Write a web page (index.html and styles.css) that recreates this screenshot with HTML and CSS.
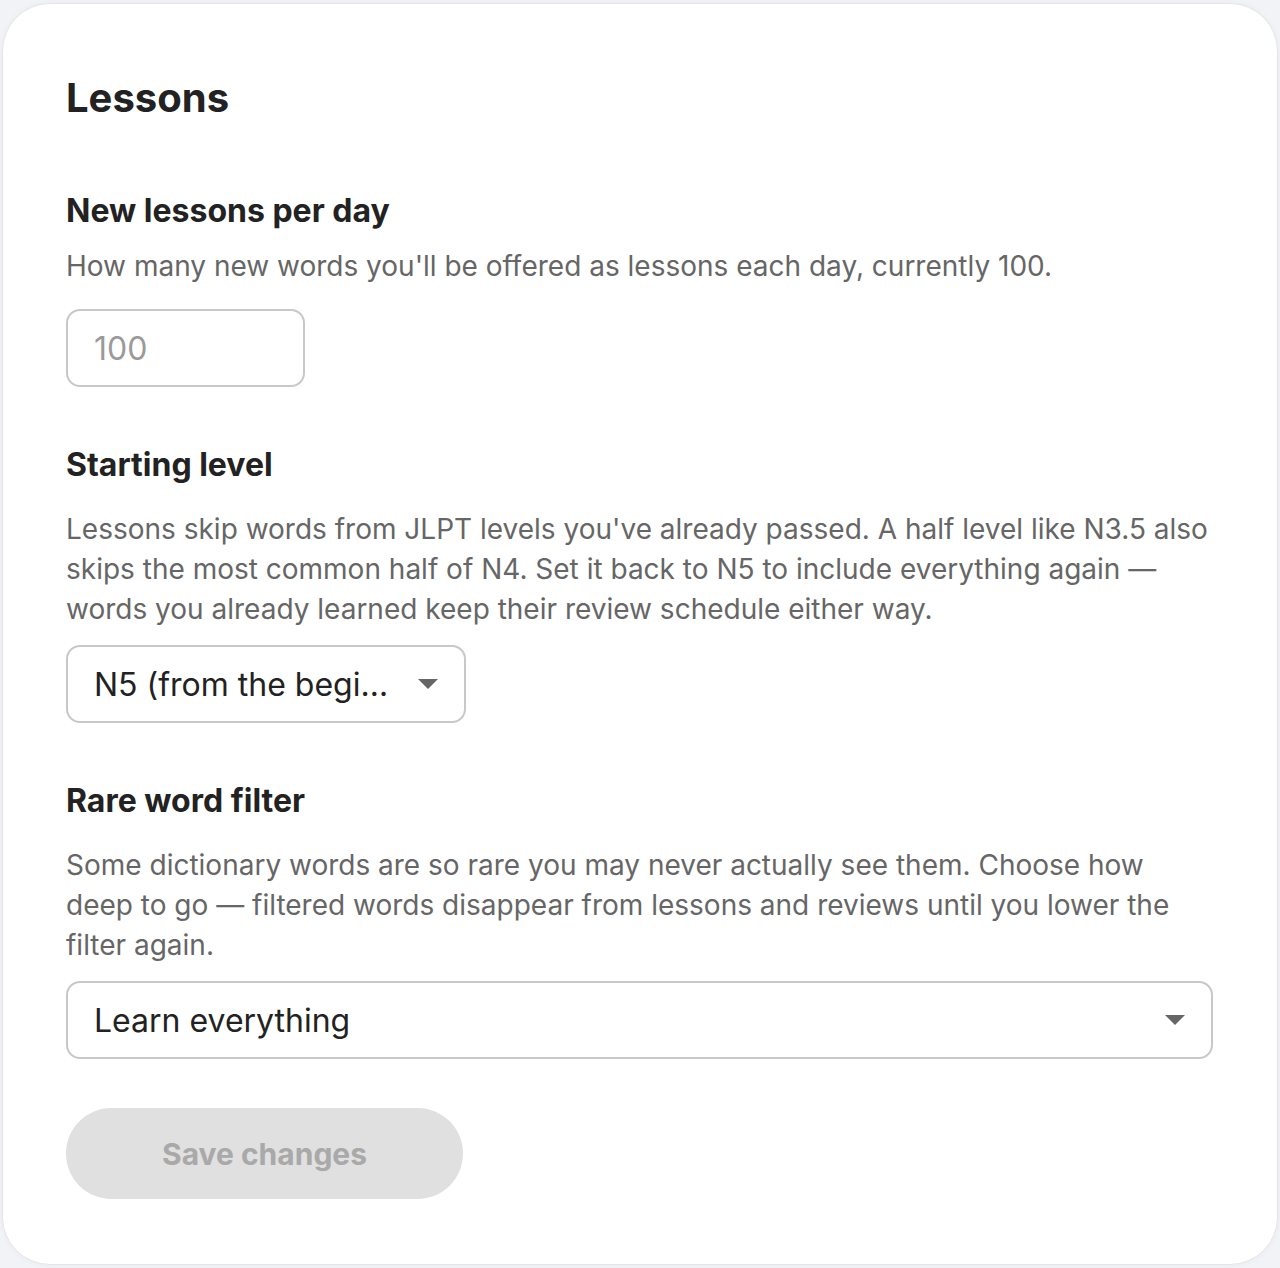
FILE: index.html
```html
<!DOCTYPE html>
<html lang="en">

<head>
  <meta charset="UTF-8">
  <meta name="viewport" content="width=device-width, initial-scale=1.0">
  <title>Lessons settings</title>
  <link rel="stylesheet" href="styles.css">
</head>

<body>

  <section class="card">
    <h1>Lessons</h1>

    <div class="field first">
      <h2>New lessons per day</h2>
      <p>How many new words you'll be offered as lessons each day, currently 100.</p>
      <input class="number" type="text" placeholder="100">
    </div>

    <div class="field">
      <h2>Starting level</h2>
      <p>Lessons skip words from JLPT levels you've already passed. A half level like N3.5 also
        skips the most common half of N4. Set it back to N5 to include everything again —
        words you already learned keep their review schedule either way.</p>
      <div class="select short">
        <span class="value">N5 (from the beginning)</span>
        <svg class="caret" width="20" height="10" viewBox="0 0 20 10"><path d="M0 0h20L10 10z" /></svg>
      </div>
    </div>

    <div class="field">
      <h2>Rare word filter</h2>
      <p>Some dictionary words are so rare you may never actually see them. Choose how
        deep to go — filtered words disappear from lessons and reviews until you lower the
        filter again.</p>
      <div class="select">
        <span class="value">Learn everything</span>
        <svg class="caret" width="20" height="10" viewBox="0 0 20 10"><path d="M0 0h20L10 10z" /></svg>
      </div>
    </div>

    <button disabled>Save changes</button>
  </section>

</body>

</html>
```

FILE: styles.css
```css
* {
  margin: 0;
  padding: 0;
  box-sizing: border-box;
  font-family: Inter, "Noto Sans", sans-serif;

  --heading: #222222;
  --text-color: #666666;
  --line: #c8c8c8;
}

body {
  background-color: #f2f3f6;
  height: 100vh;
  padding: 3px 2px 3px;
}

.card {
  background-color: #ffffff;
  border: 1px solid #e4e5ea;
  border-radius: 48px;
  box-shadow: 0 0 6px rgba(30, 40, 80, 0.04);
  height: 1262px;
  padding: 70px 64px 0 63px;
  display: flex;
  flex-direction: column;
  align-items: flex-start;
}

.card h1 {
  color: var(--heading);
  font-size: 40px;
  line-height: 48px;
  font-weight: 700;
}

.field {
  width: 100%;
  display: flex;
  flex-direction: column;
  align-items: flex-start;
  margin-top: 60px;
}

.field.first {
  margin-top: 71px;
}

.field h2 {
  color: var(--heading);
  font-size: 32px;
  line-height: 36px;
  font-weight: 700;
}

.field p {
  color: var(--text-color);
  font-size: 28px;
  line-height: 40px;
  margin: 26px 0 16px;
}

.field.first p {
  margin: 17px 0 23px;
}

.number,
.select {
  height: 78px;
  border: 2px solid var(--line);
  border-radius: 14px;
  font-size: 32px;
  color: var(--heading);
  background: #fff;
  padding: 0 26px;
}

.number {
  width: 239px;
  outline: none;
}

.number::placeholder {
  color: #9a9a9a;
}

.select {
  width: 100%;
  display: flex;
  align-items: center;
  justify-content: space-between;
  gap: 28px;
}

.select.short {
  width: 400px;
}

.select .value {
  overflow: hidden;
  white-space: nowrap;
  text-overflow: ellipsis;
}

.select .caret {
  flex-shrink: 0;
  fill: #666666;
}

button {
  margin-top: 49px;
  width: 397px;
  height: 91px;
  border: none;
  border-radius: 46px;
  background-color: #e0e0e0;
  color: #a9a9a9;
  font-size: 30px;
  font-weight: 700;
}
```
